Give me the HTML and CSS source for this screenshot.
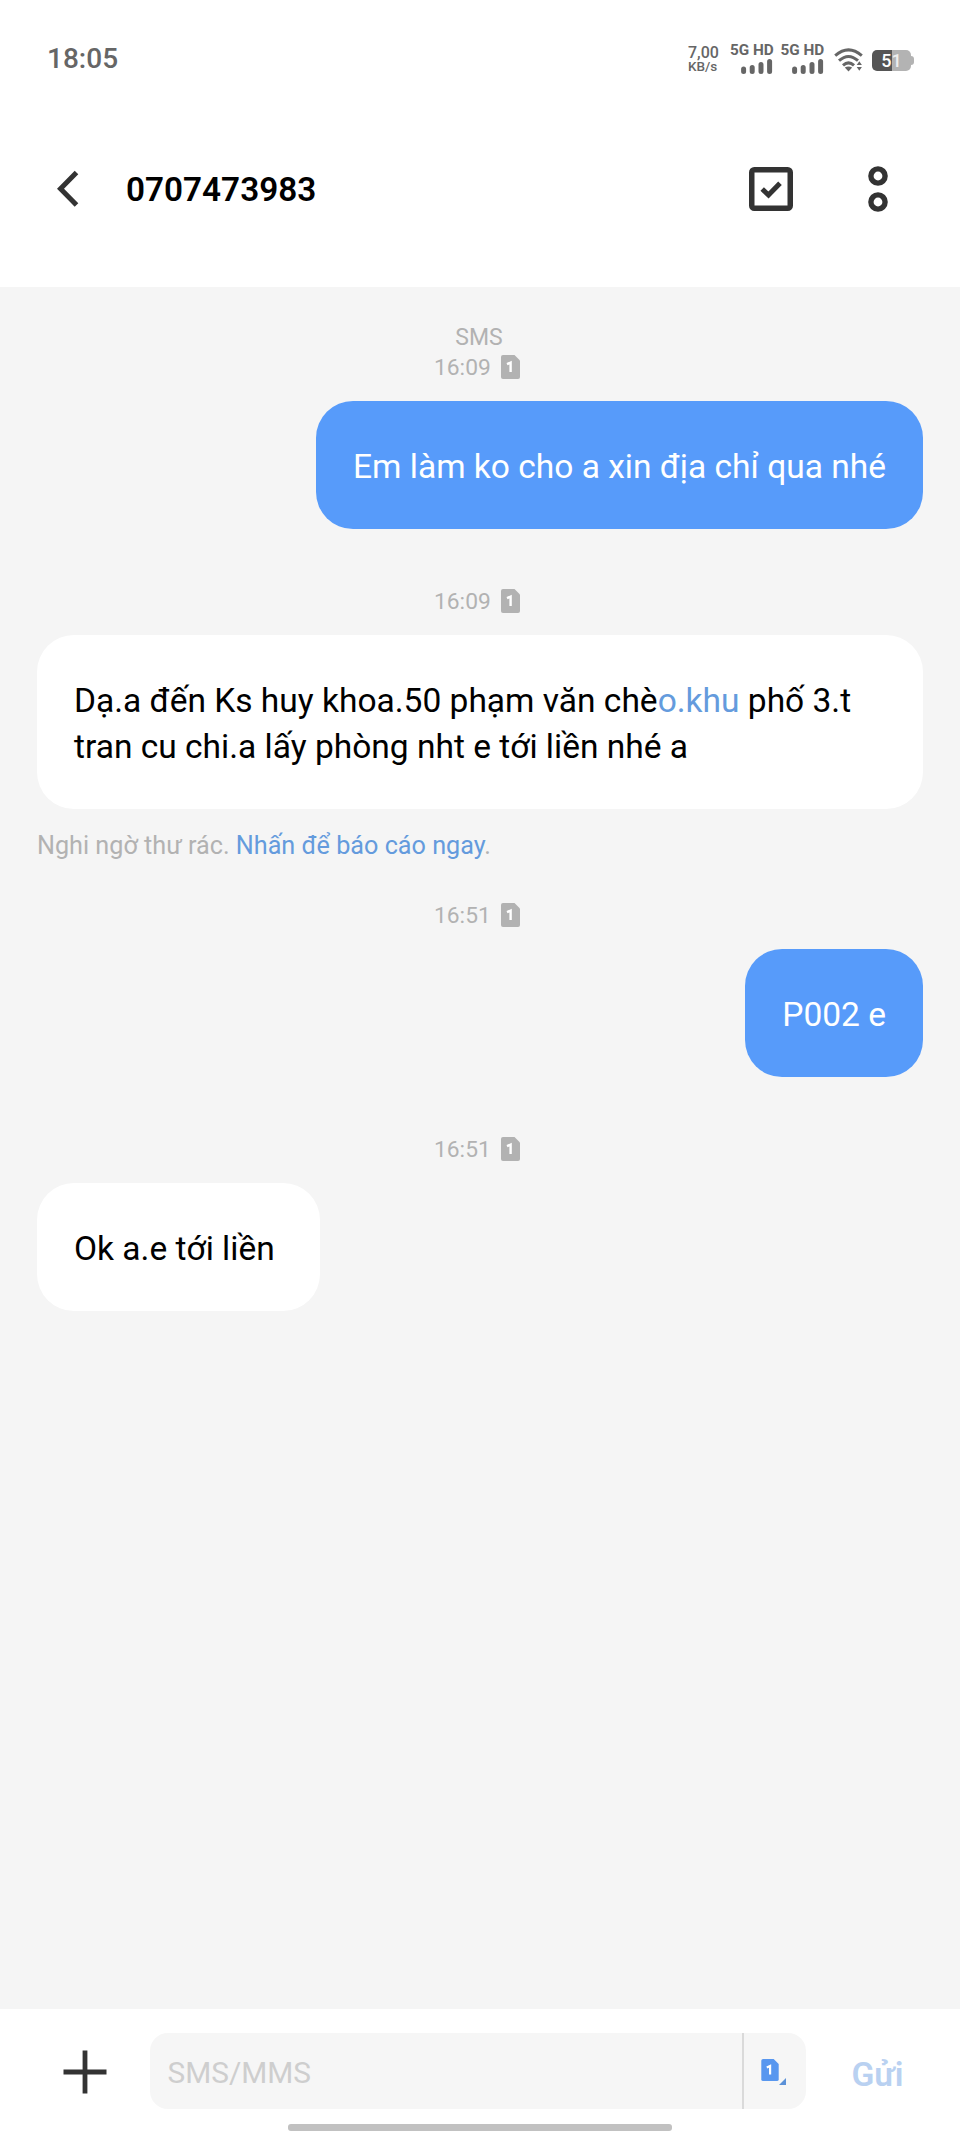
FILE: index.html
```html
<!DOCTYPE html>
<html lang="vi">
<head>
<meta charset="utf-8">
<title>0707473983</title>
<link rel="stylesheet" href="styles.css">
</head>
<body>
<svg class="defs" width="0" height="0">
  <symbol id="sim" viewBox="0 0 19 24"><path d="M2 0H13.5L19 5.5V22Q19 24 17 24H2Q0 24 0 22V2Q0 0 2 0Z" fill="currentColor"/><path d="M6 9.2L9.6 7.6V17" fill="none" stroke="#fff" stroke-width="2.4"/></symbol>
  <symbol id="bars" viewBox="0 0 32 16"><path d="M2.6 10V12.6M11.2 8.6V12.6M20 5.5V12.6M28.6 2.6V12.6" stroke="#666" stroke-width="5" stroke-linecap="round"/></symbol>
</svg>
<div class="phone">
  <header class="status">
    <span class="clock">18:05</span>
    <div class="indicators">
      <div class="speed"><span class="rate">7,00</span><span class="unit">KB/s</span></div>
      <div class="cell"><span>5G HD</span><svg width="32" height="16"><use href="#bars"/></svg></div>
      <div class="cell"><span>5G HD</span><svg width="32" height="16"><use href="#bars"/></svg></div>
      <svg class="wifi" width="30" height="24" viewBox="0 0 30 24"><g fill="none" stroke="#666" stroke-width="3"><path d="M1.2 7.6Q14.5 -3.8 27.8 7.6"/><path d="M5 12.7Q14.5 4.2 24 12.7"/><path d="M9 17.4Q14.5 12.2 20 17.4"/></g><path d="M10.8 19.6Q14.5 17.2 18.2 19.6L14.5 23.5Z" fill="#666"/><path d="M22.7 17L25.3 13.2L27.9 17ZM22.7 19H27.9L25.3 22.8Z" fill="#666"/></svg>
      <div class="battery"><span>5<i>1</i></span></div>
    </div>
  </header>
  <nav class="bar">
    <svg class="back" width="22" height="38" viewBox="0 0 22 38"><path d="M19.5 2.5L3.5 18.7L19.5 35" fill="none" stroke="#333" stroke-width="5"/></svg>
    <h1>0707473983</h1>
    <svg class="check" width="44" height="44" viewBox="0 0 44 44" fill="none" stroke="#333"><rect x="2.75" y="2.75" width="38.5" height="38.5" rx="2.5" stroke-width="5.5"/><path d="M13.2 22L19.5 28L31 16.2" stroke-width="5"/></svg>
    <svg class="more" width="20" height="46" viewBox="0 0 20 46" fill="none" stroke="#333" stroke-width="5.4"><circle cx="10" cy="10" r="7.1"/><circle cx="10" cy="36" r="7.1"/></svg>
  </nav>
  <main class="chat">
    <div class="kind">SMS</div>
    <div class="stamp"><time>16:09</time><svg class="sim"><use href="#sim"/></svg></div>
    <div class="bubble out">Em làm ko cho a xin địa chỉ qua nhé</div>
    <div class="stamp later"><time>16:09</time><svg class="sim"><use href="#sim"/></svg></div>
    <div class="bubble wide">Dạ.a đến Ks huy khoa.50 phạm văn chè<span class="link">o.khu</span> phố 3.t<br>tran cu chi.a lấy phòng nht e tới liền nhé a</div>
    <div class="spam">Nghi ngờ thư rác. <span class="link">Nhấn để báo cáo ngay</span>.</div>
    <div class="stamp after-note"><time>16:51</time><svg class="sim"><use href="#sim"/></svg></div>
    <div class="bubble out">P002 e</div>
    <div class="stamp later"><time>16:51</time><svg class="sim"><use href="#sim"/></svg></div>
    <div class="bubble in">Ok a.e tới liền</div>
  </main>
  <footer class="composer">
    <div class="compose-row">
      <svg class="plus" width="44" height="44" viewBox="0 0 44 44"><path d="M22 .5V43.5M.5 22H43.5" stroke="#333" stroke-width="4.8"/></svg>
      <div class="field">
        <span class="placeholder">SMS/MMS</span>
        <div class="sim-select"><svg class="sim-active"><use href="#sim"/></svg><svg class="corner" width="7" height="7" viewBox="0 0 7 7"><path d="M7 0V7H0Z" fill="#5b91d8"/></svg></div>
      </div>
      <span class="send">Gửi</span>
    </div>
    <div class="home"></div>
  </footer>
</div>
</body>
</html>
```

FILE: styles.css
```css
* { box-sizing: border-box; }
body { margin: 0; background: #fff; font-family: Roboto, "Noto Sans", sans-serif; }
svg { display: block; flex: none; }
.defs { position: absolute; }
.phone { width: 960px; height: 2133px; display: flex; flex-direction: column; overflow: hidden; }

.status { height: 118px; display: flex; justify-content: space-between; align-items: flex-start; padding: 42px 46px 0 47px; }
.clock { font-size: 28px; line-height: 34px; font-weight: 500; color: #666; }
.indicators { display: flex; align-items: flex-start; color: #666; }
.speed { width: 42px; display: flex; flex-direction: column; margin-top: 3px; font-weight: 500; white-space: nowrap; }
.rate { font-size: 16px; line-height: 15px; }
.unit { font-size: 13.5px; line-height: 13px; }
.cell { width: 50.5px; display: flex; flex-direction: column; font-size: 15.3px; line-height: 17px; font-weight: 700; white-space: nowrap; }
.cell svg { margin-left: 11px; }
.wifi { margin: 6px 8px 0 3px; }
.battery { width: 39px; height: 21px; margin: 8px 3px 0 0; border-radius: 5px; background: linear-gradient(90deg, #555 20px, #b3b3b3 20px); text-align: center; font-size: 18px; line-height: 22px; font-weight: 500; color: #fff; position: relative; }
.battery i { font-style: normal; color: #eee; }
.battery::after { content: ""; position: absolute; left: 39px; top: 6px; width: 3px; height: 9px; border-radius: 0 3px 3px 0; background: #b3b3b3; }

.bar { height: 169px; display: flex; align-items: flex-start; padding: 49px 72px 0 57px; }
.back { margin-top: 3px; }
.bar h1 { margin: 3px auto 0 47px; font-size: 33.3px; line-height: 40px; font-weight: 600; color: #000; }
.check { margin-right: 75px; }
.more { margin-top: -1px; }

.chat { flex: 1; background: #f5f5f5; padding: 36px 37px 0; display: flex; flex-direction: column; align-items: flex-start; }
.kind { align-self: center; margin-right: 2px; font-size: 23px; line-height: 30px; color: #b2b2b2; }
.stamp { width: 100%; height: 30px; margin-bottom: 17.5px; padding-left: 397px; display: flex; align-items: flex-start; font-size: 22.8px; line-height: 29px; color: #b2b2b2; }
.stamp time { width: 67px; }
.later { margin-top: 58px; }
.after-note { margin-top: 40.5px; }
.sim { width: 19px; height: 24px; margin-top: 2px; }
.bubble { padding: 43px 37px 39.5px; border-radius: 37px; background: #fff; font-size: 33.52px; line-height: 46px; color: #000; white-space: nowrap; }
.wide { width: 100%; }
.in { padding-right: 45px; }
.out { align-self: flex-end; background: #579bfa; color: #fff; }
.link { color: #649bdd; }
.spam { margin-top: 22px; margin-bottom: -.5px; font-size: 25.2px; line-height: 30px; color: #b2b2b2; white-space: nowrap; }

.composer { height: 124px; display: flex; flex-direction: column; align-items: center; padding-top: 23.5px; }
.compose-row { width: 100%; height: 76.5px; padding-left: 62.5px; display: flex; align-items: center; }
.plus { margin-top: 3px; }
.field { width: 656px; height: 76.5px; margin: 0 46px 0 43px; display: flex; align-items: center; border-radius: 18px; background: #f6f6f6; }
.placeholder { flex: 1; padding-left: 18px; font-size: 29.8px; font-weight: 400; line-height: 36px; color: #cecece; margin-top: 4px; }
.sim-select { width: 64px; height: 76.5px; border-left: 2px solid #dadada; display: flex; padding: 26.5px 0 0 17px; color: #5897ef; }
.sim-active { width: 18px; height: 22px; }
.corner { margin-top: 19px; }
.send { font-size: 33.5px; font-weight: 600; line-height: 40px; margin-top: 8px; color: #b9d1f1; }
.home { width: 384px; height: 6.5px; margin-top: 15px; border-radius: 3px; background: #c1c1c1; }
```
